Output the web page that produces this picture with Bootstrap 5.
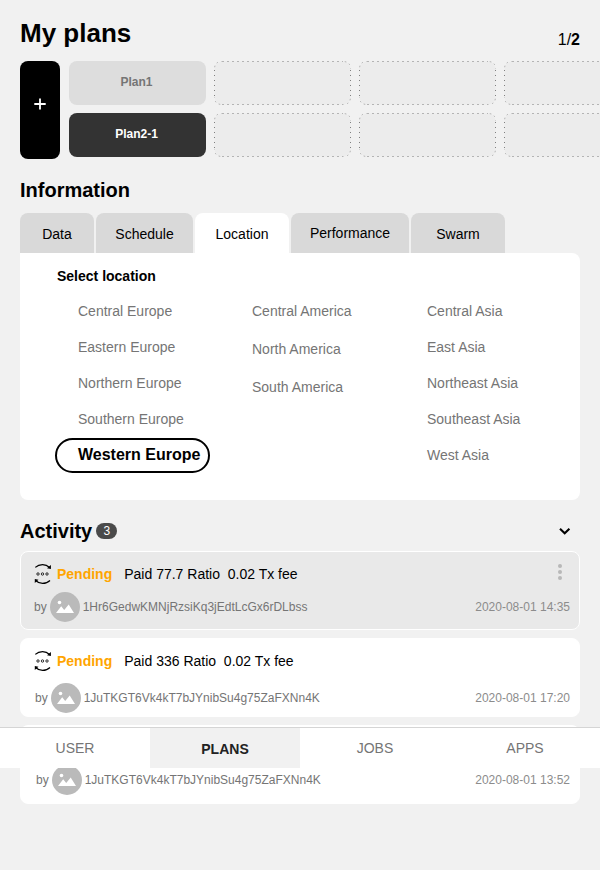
<!DOCTYPE html>
<html lang="en">
<head>
<meta charset="utf-8">
<meta name="viewport" content="width=device-width, initial-scale=1">
<title>My plans</title>
<link href="https://cdn.jsdelivr.net/npm/bootstrap@5.3.0/dist/css/bootstrap.min.css" rel="stylesheet">
<style>
body{font-family:"Liberation Sans",Arial,sans-serif;background:#f1f1f1;color:#000;font-size:14px;line-height:20px;min-height:870px;overflow:hidden}
.page{padding:0 20px}
h1,h2{font-weight:700;margin:0}
h1{font-size:26px;line-height:30px}
h2{font-size:20px;line-height:24px}
.top-line{padding-top:18px;height:61px}
.pager{font-size:16px;margin-top:12px}
.plans{height:98px;gap:9px;margin-right:-20px;overflow:hidden}
.add-plan{width:40px;background:#000;border-radius:8px;padding:0 1px 13px 0}
.slots{display:grid;grid-template-columns:repeat(4,137px);grid-auto-rows:44px;gap:8px}
.slot{font-size:12px;font-weight:700;border-radius:8px;padding:0 2px 2px 0}
.slot-idle{background:#ddd;color:#757575}
.slot-live{background:#333;color:#fff}
.info-title{margin-top:19px;margin-bottom:11px}
.tabs{gap:2px}
.tabs .nav-link{height:40px;padding:2px 0 0;background:#d9d9d9;color:#000;border-radius:8px 8px 0 0;display:flex;align-items:center;justify-content:center}
.tabs .nav-link.active{background:#fff}
.w-data{width:74px}.w-sched{width:97px}.w-loc{width:94px}.w-perf{width:118px}
.tabs .w-perf{padding:0 0 1px}
.panel{background:#fff;border-radius:0 8px 8px 8px;height:247px;padding:13px 37px 0}
.regions{display:grid;grid-template-columns:174px 175px 1fr;padding:7px 0 0 21px;color:#757575}
.regions li{height:36px;line-height:36px}
.regions .loose li{height:38px;line-height:36px}
.regions li.picked{margin:1px 0 0 -23px;width:155px;height:35px;line-height:29px;padding-left:21px;border:2px solid #000;border-radius:18px;color:#000;font-weight:700;font-size:16px;white-space:nowrap}
.act-head{margin-top:19px;height:24px;padding-right:9px}
.count{width:21px;height:16px;line-height:16px;border-radius:8px;background:#4a4a4a;color:#fff;font-size:12px;text-align:center;margin-left:4px}
.feed{margin-top:8px;gap:8px}
.entry{height:79px;border-radius:8px;background:#fff;padding:11px 9px 0 13px;border:1px solid #fff}
.entry-live{background:#e9e9e9}
.state{color:#ffa500;font-weight:700;margin:0 12px 0 5px}
.more{margin-bottom:4px}
.meta{font-size:12px;color:#757575;height:30px;margin-top:7px}
.meta time{color:#8c8c8c}
.meta .face{margin:0 3px}
.entry-2 .meta{margin-top:11px;padding-left:1px}
.entry-3 .meta{margin-top:6px;padding-left:2px}
.dock{position:absolute;left:0;right:0;top:727px;height:41px;background:#fff;border-top:1px solid #d5d5d5}
.dock a{height:40px;color:#757575;padding:0}
.dock a.on{background:#f1f1f1;color:#222;font-weight:700;padding-top:2px}
svg{display:block;flex:none}
</style>
</head>
<body>
<svg width="0" height="0" class="position-absolute">
  <symbol id="sync" viewBox="0 0 18 22">
    <g fill="none" stroke="#000" stroke-width="1.2">
      <path d="M1.300 4.400Q4.300 1.600 8.600 1.600Q12.600 1.600 15.600 4.500M1.600 17.500Q4.600 20.400 8.600 20.400Q13 20.400 16 17.500"/>
      <g stroke-width=".8"><circle cx="4" cy="11" r="1.200"/><circle cx="8.500" cy="11" r="1.200"/><circle cx="13" cy="11" r="1.200"/></g>
    </g>
    <path d="M16.900 2V5.900L13 5.300ZM.800 20.100V16.100L4.500 16.800Z"/>
  </symbol>
  <symbol id="face" viewBox="0 0 30 30">
    <circle cx="15" cy="15" r="15" fill="#bababa"/>
    <circle cx="9.500" cy="10.500" r="1.800" fill="#fff"/>
    <path d="M6 21L11.200 14.300L14.200 18L18.700 12.600L24 21Z" fill="#fff"/>
  </symbol>
  <symbol id="slot" viewBox="0 0 137 44">
    <rect x=".5" y=".5" width="136" height="43" rx="8" fill="#ececec"/>
    <path d="M8 .5H129M8 43.500H129" stroke="#b4b4b4" stroke-dasharray="2 3"/>
    <path d="M.500 9V36M136.500 9V36" stroke="#808080" stroke-dasharray="1 4"/>
    <path d="M.500 8Q.500 .500 8 .500M129 .500Q136.500 .500 136.500 8M136.500 36Q136.500 43.500 129 43.500M8 43.500Q.500 43.500 .500 36" fill="none" stroke="#aaa" stroke-dasharray="1.500 3.500" stroke-dashoffset="-1.500"/>
  </symbol>
</svg>

<main class="page">
  <header class="top-line d-flex justify-content-between align-items-start">
    <h1>My plans</h1>
    <div class="pager">1/<b>2</b></div>
  </header>

  <section class="plans d-flex">
    <a class="add-plan d-flex align-items-center justify-content-center flex-shrink-0" href="#" aria-label="Add plan">
      <svg width="12" height="12" viewBox="0 0 12 12"><path d="M6 .5V11.500M.300 6H11.700" stroke="#fff" stroke-width="1.800"/></svg>
    </a>
    <div class="slots">
      <div class="slot slot-idle d-flex align-items-center justify-content-center">Plan1</div>
      <svg width="137" height="44"><use href="#slot"/></svg>
      <svg width="137" height="44"><use href="#slot"/></svg>
      <svg width="137" height="44"><use href="#slot"/></svg>
      <div class="slot slot-live d-flex align-items-center justify-content-center">Plan2-1</div>
      <svg width="137" height="44"><use href="#slot"/></svg>
      <svg width="137" height="44"><use href="#slot"/></svg>
      <svg width="137" height="44"><use href="#slot"/></svg>
    </div>
  </section>

  <h2 class="info-title">Information</h2>
  <nav class="nav tabs">
    <a class="nav-link w-data" href="#">Data</a>
    <a class="nav-link w-sched" href="#">Schedule</a>
    <a class="nav-link w-loc active" href="#">Location</a>
    <a class="nav-link w-perf" href="#">Performance</a>
    <a class="nav-link w-loc" href="#">Swarm</a>
  </nav>
  <section class="panel">
    <div class="fw-bold">Select location</div>
    <div class="regions">
      <ul class="list-unstyled m-0">
        <li>Central Europe</li><li>Eastern Europe</li><li>Northern Europe</li><li>Southern Europe</li><li class="picked">Western Europe</li>
      </ul>
      <ul class="list-unstyled m-0 loose">
        <li>Central America</li><li>North America</li><li>South America</li>
      </ul>
      <ul class="list-unstyled m-0">
        <li>Central Asia</li><li>East Asia</li><li>Northeast Asia</li><li>Southeast Asia</li><li>West Asia</li>
      </ul>
    </div>
  </section>

  <header class="act-head d-flex align-items-center">
    <h2>Activity</h2><span class="count">3</span>
    <svg class="ms-auto" width="12" height="8" viewBox="0 0 12 8"><path d="M1 1.700L5.700 6.200L10.400 1.700" fill="none" stroke="#000" stroke-width="2.100"/></svg>
  </header>
  <section class="feed d-flex flex-column">
    <article class="entry entry-live">
      <div class="d-flex align-items-center">
        <svg width="18" height="22"><use href="#sync"/></svg>
        <span class="state">Pending</span><span>Paid 77.7 Ratio&nbsp; 0.02 Tx fee</span>
        <svg class="more ms-auto me-2" width="4" height="16" viewBox="0 0 4 16" fill="#b8b8b8"><circle cx="2" cy="2" r="2"/><circle cx="2" cy="8" r="2"/><circle cx="2" cy="14" r="2"/></svg>
      </div>
      <div class="meta d-flex align-items-center">
        <span>by</span><svg class="face" width="30" height="30"><use href="#face"/></svg><span>1Hr6GedwKMNjRzsiKq3jEdtLcGx6rDLbss</span>
        <time class="ms-auto">2020-08-01 14:35</time>
      </div>
    </article>
    <article class="entry entry-2">
      <div class="d-flex align-items-center">
        <svg width="18" height="22"><use href="#sync"/></svg>
        <span class="state">Pending</span><span>Paid 336 Ratio&nbsp; 0.02 Tx fee</span>
      </div>
      <div class="meta d-flex align-items-center">
        <span>by</span><svg class="face" width="30" height="30"><use href="#face"/></svg><span>1JuTKGT6Vk4kT7bJYnibSu4g75ZaFXNn4K</span>
        <time class="ms-auto">2020-08-01 17:20</time>
      </div>
    </article>
    <article class="entry entry-3">
      <div class="d-flex align-items-center">
        <svg width="18" height="22"><use href="#sync"/></svg>
      </div>
      <div class="meta d-flex align-items-center">
        <span>by</span><svg class="face" width="30" height="30"><use href="#face"/></svg><span>1JuTKGT6Vk4kT7bJYnibSu4g75ZaFXNn4K</span>
        <time class="ms-auto">2020-08-01 13:52</time>
      </div>
    </article>
  </section>
</main>

<nav class="dock nav nav-justified">
  <a class="nav-link nav-item d-flex align-items-center justify-content-center" href="#">USER</a>
  <a class="nav-link nav-item on d-flex align-items-center justify-content-center" href="#">PLANS</a>
  <a class="nav-link nav-item d-flex align-items-center justify-content-center" href="#">JOBS</a>
  <a class="nav-link nav-item d-flex align-items-center justify-content-center" href="#">APPS</a>
</nav>
<script src="https://cdn.jsdelivr.net/npm/bootstrap@5.3.0/dist/js/bootstrap.bundle.min.js"></script>
</body>
</html>
